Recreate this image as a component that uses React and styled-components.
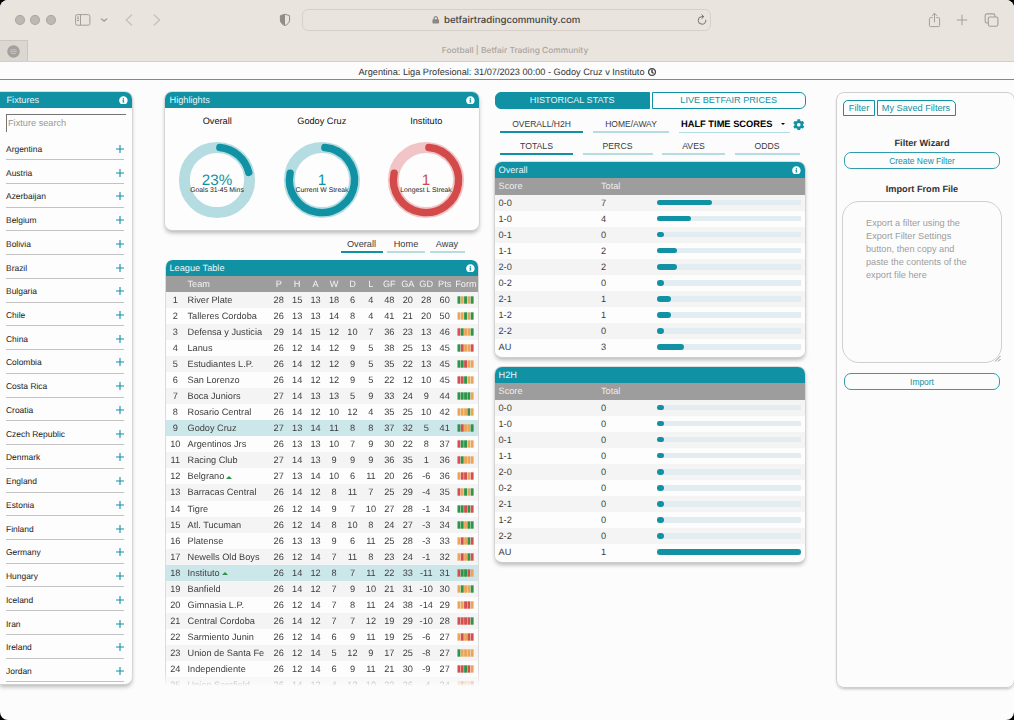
import React from "react";
import styled, { createGlobalStyle } from "styled-components";
import { FaInfoCircle, FaCog, FaRegClock, FaLock } from "react-icons/fa";

const TEAL = "#1092a4";
const PALE = "#b5dde1";
const RED = "#d34a4a";
const FORM_COLORS = { g: "#2e9447", o: "#eaa558", r: "#d2514f" };

const GlobalStyle = createGlobalStyle`
  * {
    box-sizing: border-box;
  }

  body {
    margin: 0;
    background: #000;
    color: #333;
    font-family: "Liberation Sans", Arial, Helvetica, sans-serif;
    font-size: 9.2px;
    text-rendering: geometricPrecision;
  }

  button,
  input,
  textarea {
    font-family: inherit;
    outline: none;
  }
`;

const Window = styled.div`
  display: flex;
  flex-direction: column;
  width: 1014px;
  height: 720px;
  overflow: hidden;
  border-radius: 8px;
  background: #fcfcfd;
`;

/* browser chrome */

const Toolbar = styled.div`
  flex: none;
  display: flex;
  align-items: center;
  height: 40px;
  padding: 0 15px;
  background: #e9e4de;
  color: #a39e99;

  svg {
    flex: none;
    display: block;
  }
`;

const Light = styled.i`
  width: 10px;
  height: 10px;
  margin-right: 5.3px;
  border: 1px solid #aaa5a1;
  border-radius: 50%;
  background: #bdb8b4;
`;

const Spacer = styled.div`
  flex: none;
  width: ${props => props.w || 1}px;
  height: ${props => props.h || 0}px;
`;

const Address = styled.div`
  display: flex;
  align-items: center;
  justify-content: center;
  position: relative;
  width: 411px;
  height: 22px;
  border: 1px solid #d5d0ca;
  border-radius: 6px;
  background: #e9e4de;
  color: #45423f;
  font-family: Inter, sans-serif;
  font-size: 9.65px;
  font-weight: 500;

  span {
    margin-left: 4px;
  }
`;

const Reload = styled.svg`
  position: absolute;
  right: 2px;
  top: 4px;
`;

const TabStrip = styled.div`
  flex: none;
  display: flex;
  height: 22px;
  border-bottom: 1px solid #d2cec9;
  background: #e9e4de;
`;

const PinnedTab = styled.div`
  display: flex;
  align-items: center;
  justify-content: center;
  width: 28px;
  border-top: 1px solid #cbc6c0;
  border-right: 1px solid #cbc6c0;
  background: #dcd7d1;
`;

const TabTitle = styled.div`
  flex: 1;
  padding-right: 40px;
  margin-left: 28px;
  color: #aaa6a1;
  font-family: Inter, sans-serif;
  font-size: 8.4px;
  font-weight: 500;
  line-height: 22px;
  text-align: center;
`;

const MatchTitle = styled.div`
  flex: none;
  display: flex;
  align-items: center;
  justify-content: center;
  height: 18px;
  padding: 2px 0 0;
  border-bottom: 1px solid #3fa3b1;

  svg {
    margin-left: 3px;
    font-size: 8px;
    stroke: currentColor;
    stroke-width: 30px;
  }
`;

const Content = styled.div`
  display: flex;
  align-items: flex-start;
  padding-top: 12px;
`;

/* shared pieces */

const Panel = styled.section`
  overflow: hidden;
  border-radius: 7px;
  background: #fdfdfd;
  box-shadow: 0 0 0 0.8px #d3d3d5, 0 3px 4px rgba(0, 0, 0, 0.27);
`;

const PanelHeader = styled.header`
  display: flex;
  align-items: center;
  justify-content: space-between;
  height: 16px;
  padding: 0 4.5px 0 ${props => props.pad || 4.5}px;
  background: ${TEAL};
  color: #e9f6f8;

  svg {
    color: #fff;
    font-size: 8.8px;
  }
`;

const Tab = styled.button`
  flex: none;
  width: ${props => props.w}px;
  height: ${props => props.h || 16}px;
  padding: 0;
  border: 0;
  border-bottom: 2.4px solid ${props => (props.active ? TEAL : PALE)};
  background: none;
  color: #3a3a3a;
  font-size: ${props => props.size || 9.2}px;
  line-height: 11px;
  text-align: center;
`;

/* fixtures */

const Fixtures = styled(Panel)`
  flex: none;
  width: 132px;
  height: 592px;
  border-radius: 0 7px 7px 0;
`;

const Search = styled.input`
  display: block;
  width: 120px;
  height: 17.5px;
  margin: 6px 0 5px 6px;
  padding: 0 1px;
  border: 0;
  border-top: 1.5px solid #747474;
  border-left: 1.5px solid #747474;
  background: transparent;
  font-size: 9.2px;

  &::placeholder {
    color: #979797;
    opacity: 1;
  }
`;

const Country = styled.div`
  display: flex;
  align-items: center;
  justify-content: space-between;
  width: 117.5px;
  height: 23.74px;
  margin-left: 6px;
  padding-top: 2px;
  border-bottom: 1px solid #c2c2c2;
  color: #222;
  font-size: 8.45px;
`;

/* highlights and league table */

const Center = styled.div`
  flex: none;
  width: 314px;
  margin-left: 33px;
`;

const Highlights = styled(Panel)`
  height: 138px;
`;

const Charts = styled.div`
  display: grid;
  grid-template-columns: repeat(3, 104.5px);
`;

const Chart = styled.div`
  display: flex;
  flex-direction: column;
  align-items: center;
  color: #111;

  h4 {
    margin: 8px 0 14px;
    font-size: 9.2px;
    font-weight: normal;
    line-height: 11px;
  }
`;

const VenueTabs = styled.div`
  display: flex;
  justify-content: flex-end;
  gap: 4.5px;
  height: 30px;
  padding: 7px 14.5px 0 0;
`;

const LeaguePanel = styled(Panel)`
  height: 426px;
  border-radius: 7px 7px 0 0;
  border-right: 1px solid #dcdcde;
  border-left: 1px solid #dcdcde;
  box-shadow: none;
  mask-image: linear-gradient(#000 412px, rgba(0, 0, 0, 0.25) 423px, transparent 426px);
`;

const LeagueHeader = styled(PanelHeader)`
  padding: 0 3.5px;
`;

const LeagueRow = styled.div`
  display: grid;
  grid-template-columns: 18.5px 85px repeat(10, 18.45px) 1fr;
  align-items: center;
  height: ${props => (props.head ? 15.5 : 16.09)}px;
  background: ${props => (props.head ? "#9d9d9d" : props.marked ? "#cce7ea" : props.odd ? "#f4f4f4" : "#fdfdfd")};
  color: ${props => (props.head ? "#f3f3f3" : "#3c3c3c")};
  text-align: center;
  white-space: nowrap;
`;

const Team = styled.span`
  padding-left: 3px;
  text-align: left;
`;

const Up = styled.i`
  display: inline-block;
  margin-left: 2px;
  vertical-align: 0.5px;
  border: 3px solid transparent;
  border-top: 0;
  border-bottom: 3px solid #2b9447;
`;

const FormChart = styled.svg`
  display: block;
  margin: 0 auto;
`;

/* stats */

const Stats = styled.div`
  flex: none;
  width: 311px;
  margin-left: 16px;
`;

const Modes = styled.div`
  display: flex;
  gap: 2px;
`;

const Mode = styled.button`
  flex: 1;
  height: 17px;
  padding: 0 0 1px;
  border: 1.5px solid ${TEAL};
  border-radius: ${props => (props.active ? "6px 0 0 6px" : "0 6px 6px 0")};
  background: ${props => (props.active ? TEAL : "#fdfdfd")};
  color: ${props => (props.active ? "#e9f6f8" : TEAL)};
  font-size: 9.15px;
`;

const TabRow = styled.div`
  display: flex;
  align-items: flex-start;
  gap: ${props => props.gap}px;
  padding: ${props => props.top}px 0 0 5px;
`;

const Market = styled.div`
  flex: none;
  display: flex;
  align-items: center;
  justify-content: space-between;
  width: 111px;
  height: 14px;
  padding: 0 5px 2px 2px;
  border-bottom: 1.8px solid ${PALE};
  color: #000;
  font-size: 9.3px;
  font-weight: bold;

  i {
    border: 2.2px solid transparent;
    border-top: 2.8px solid #000;
    border-bottom: 0;
  }
`;

const Gear = styled(FaCog)`
  flex: none;
  margin-left: -7px;
  color: ${TEAL};
  font-size: 11.5px;
`;

const ScorePanel = styled(Panel)`
  width: 310px;
  height: 194.5px;
  margin-top: ${props => props.top}px;
`;

const ScoreRow = styled.div`
  display: grid;
  grid-template-columns: 102.5px 56px 144px;
  align-items: center;
  height: ${props => (props.head ? 16.5 : 16.06)}px;
  padding-left: 3.5px;
  background: ${props => (props.head ? "#9d9d9d" : props.odd ? "#f4f4f4" : "#fdfdfd")};
  color: ${props => (props.head ? "#eee" : "#3c3c3c")};
`;

const Track = styled.div`
  height: 5.6px;
  background: #e3edf1;
`;

const Fill = styled.div`
  height: 100%;
  border-radius: 3px;
  background: ${TEAL};
`;

/* filters */

const Filters = styled.aside`
  flex: none;
  display: flex;
  flex-direction: column;
  width: 179px;
  height: 596px;
  margin-left: 29.5px;
  padding: 7px 0 0 6.5px;
  border: 1px solid #cfcfd2;
  border-radius: 8px;
  box-shadow: 0 2px 3px -1px rgba(0, 0, 0, 0.25);
`;

const FilterTabs = styled.div`
  display: flex;
  gap: 1.5px;
  margin-bottom: 21px;
`;

const FilterTab = styled.button`
  width: ${props => props.w}px;
  height: 16px;
  padding: 0;
  border: 1.2px solid ${TEAL};
  border-radius: ${props => (props.first ? "5px 0 0 0" : "0 5px 0 0")};
  background: none;
  color: ${TEAL};
  font-size: 9.2px;
`;

const FilterHeading = styled.h3`
  width: 158px;
  margin: 0;
  color: #333;
  font-size: 9.2px;
  line-height: 13px;
  text-align: center;
`;

const Pill = styled.button`
  width: 156px;
  height: 17px;
  margin-left: 1px;
  padding: 0;
  border: 1.2px solid #2f9dad;
  border-radius: 7px;
  background: none;
  color: ${TEAL};
  font-size: 8.45px;
`;

const ImportBox = styled.div`
  position: relative;
  width: 160px;
  height: 162px;
  margin: 5px 0 10px -1px;

  textarea {
    display: block;
    width: 100%;
    height: 100%;
    padding: 15px 26px 0 23px;
    border: 1px solid #cfcfcf;
    border-radius: 17px;
    background: transparent;
    font-size: 9.2px;
    line-height: 13px;
    resize: none;
    overflow: hidden;
  }

  textarea::placeholder {
    color: #9c9c9c;
    opacity: 1;
  }

  svg {
    position: absolute;
    right: 1px;
    bottom: 1px;
  }
`;

const countries = [
  "Argentina", "Austria", "Azerbaijan", "Belgium", "Bolivia", "Brazil", "Bulgaria", "Chile",
  "China", "Colombia", "Costa Rica", "Croatia", "Czech Republic", "Denmark", "England", "Estonia",
  "Finland", "Germany", "Hungary", "Iceland", "Iran", "Ireland", "Jordan"
];

const league = [
  ["River Plate", [28, 15, 13, 18, 6, 4, 48, 20, 28, 60], "gogog"],
  ["Talleres Cordoba", [26, 13, 13, 14, 8, 4, 41, 21, 20, 50], "oogog"],
  ["Defensa y Justicia", [29, 14, 15, 12, 10, 7, 36, 23, 13, 46], "rgoog"],
  ["Lanus", [26, 12, 14, 12, 9, 5, 38, 25, 13, 45], "groor"],
  ["Estudiantes L.P.", [26, 14, 12, 12, 9, 5, 35, 22, 13, 45], "ggroo"],
  ["San Lorenzo", [26, 14, 12, 12, 9, 5, 22, 12, 10, 45], "rrgoo"],
  ["Boca Juniors", [27, 14, 13, 13, 5, 9, 33, 24, 9, 44], "ggggo"],
  ["Rosario Central", [26, 14, 12, 10, 12, 4, 35, 25, 10, 42], "ooogo"],
  ["Godoy Cruz", [27, 13, 14, 11, 8, 8, 37, 32, 5, 41], "groog"],
  ["Argentinos Jrs", [26, 13, 13, 10, 7, 9, 30, 22, 8, 37], "rggoo"],
  ["Racing Club", [27, 14, 13, 9, 9, 9, 36, 35, 1, 36], "rgooo"],
  ["Belgrano", [27, 13, 14, 10, 6, 11, 20, 26, -6, 36], "orror", true],
  ["Barracas Central", [26, 14, 12, 8, 11, 7, 25, 29, -4, 35], "rogog"],
  ["Tigre", [26, 12, 14, 9, 7, 10, 27, 28, -1, 34], "ggrgr"],
  ["Atl. Tucuman", [26, 12, 14, 8, 10, 8, 24, 27, -3, 34], "ggogg"],
  ["Platense", [26, 13, 13, 9, 6, 11, 25, 28, -3, 33], "orogr"],
  ["Newells Old Boys", [26, 12, 14, 7, 11, 8, 23, 24, -1, 32], "orogr"],
  ["Instituto", [26, 14, 12, 8, 7, 11, 22, 33, -11, 31], "rggro", true],
  ["Banfield", [26, 14, 12, 7, 9, 10, 21, 31, -10, 30], "ogoog"],
  ["Gimnasia L.P.", [26, 12, 14, 7, 8, 11, 24, 38, -14, 29], "oorro"],
  ["Central Cordoba", [26, 14, 12, 7, 7, 12, 19, 29, -10, 28], "rrrrg"],
  ["Sarmiento Junin", [26, 12, 14, 6, 9, 11, 19, 25, -6, 27], "ororr"],
  ["Union de Santa Fe", [26, 12, 14, 5, 12, 9, 17, 25, -8, 27], "goooo"],
  ["Independiente", [26, 12, 14, 6, 9, 11, 21, 30, -9, 27], "rrgro"],
  ["Union Sarsfield", [26, 14, 12, 4, 12, 10, 22, 26, -4, 24], "oroor"]
];

const playing = ["Godoy Cruz", "Instituto"];

// [score, total, bar width in %]
const overall = [
  ["0-0", 7, 38], ["1-0", 4, 23.8], ["0-1", 0, 4.7], ["1-1", 2, 14.2], ["2-0", 2, 14.2],
  ["0-2", 0, 4.7], ["2-1", 1, 9.4], ["1-2", 1, 9.4], ["2-2", 0, 4.7], ["AU", 3, 19]
];

const h2h = overall.map(([score]) => (score === "AU" ? [score, 1, 100] : [score, 0, 4.7]));

const point = (deg, r) => {
  const a = (deg * Math.PI) / 180;
  return `${39 + r * Math.sin(a)} ${39 - r * Math.cos(a)}`;
};

const Donut = ({ end, value, label, color, track }) => (
  <svg width="78" height="78" viewBox="0 0 78 78">
    <circle cx="39" cy="39" r="32.6" fill="none" stroke={track} strokeWidth="11" />
    <path
      d={`M${point(5, 32.6)}A32.6 32.6 0 ${end > 185 ? 1 : 0} 1 ${point(end, 32.6)}`}
      fill="none"
      stroke={color}
      strokeWidth="7.4"
      strokeLinecap="round"
    />
    <text x="39" y="43.6" textAnchor="middle" fontSize="15.2" fill={color}>{value}</text>
    <text x="39" y="50.6" textAnchor="middle" fontSize="6.85" fill="#222">{label}</text>
  </svg>
);

const Form = ({ results }) => (
  <FormChart width="17" height="8" viewBox="0 0 17 8">
    {results.split("").map((result, key) => (
      <rect key={key} x={0.5 + key * 3.3} y="0.3" width="2.9" height="7.4" fill={FORM_COLORS[result]} />
    ))}
  </FormChart>
);

const Scores = ({ title, rows, top, info }) => (
  <ScorePanel top={top}>
    <PanelHeader pad={3.5}>
      {title}
      {info && <FaInfoCircle />}
    </PanelHeader>
    <ScoreRow head>
      <span>Score</span>
      <span>Total</span>
    </ScoreRow>
    {rows.map(([score, total, width], key) => (
      <ScoreRow key={score} odd={key % 2 === 0 ? 1 : 0}>
        <span>{score}</span>
        <span>{total}</span>
        <Track>
          <Fill style={{ width: `${width}%` }} />
        </Track>
      </ScoreRow>
    ))}
  </ScorePanel>
);

const Chrome = () => (
  <>
    <Toolbar>
      <Light />
      <Light />
      <Light />
      <Spacer w={14} />
      <svg width="16" height="12" viewBox="0 0 16 12" fill="none" stroke="currentColor">
        <rect x="0.6" y="0.6" width="14.3" height="10.6" rx="1.6" />
        <path d="M5.5 .6v10.6M2 3h2M2 4.8h2M2 6.6h2" />
      </svg>
      <Spacer w={9} />
      <svg width="8" height="6" viewBox="0 0 8 6" fill="none" stroke="currentColor" strokeWidth="1.4" strokeLinecap="round">
        <path d="M1.5 2l2.6 2 2.6-2" />
      </svg>
      <Spacer w={17} />
      <svg width="8" height="12" viewBox="0 0 8 12" fill="none" stroke="#c6c1bc" strokeWidth="1.3" strokeLinecap="round">
        <path d="M6.6 1L1.2 6l5.4 5" />
      </svg>
      <Spacer w={20} />
      <svg width="8" height="12" viewBox="0 0 8 12" fill="none" stroke="#c6c1bc" strokeWidth="1.3" strokeLinecap="round">
        <path d="M1.2 1l5.4 5-5.4 5" />
      </svg>
      <Spacer w={118} />
      <svg width="12" height="14" viewBox="0 0 12 14">
        <path d="M6 1.2L10.6 2.7V7c0 2.8-2.2 4.5-4.6 5.6C3.6 11.5 1.4 9.8 1.4 7V2.7z" fill="none" stroke="#918c88" />
        <path d="M6 1.2v11.4C3.6 11.5 1.4 9.8 1.4 7V2.7z" fill="#918c88" />
      </svg>
      <Spacer w={11} />
      <Address>
        <FaLock size={7.5} color="#8b8783" />
        <span>betfairtradingcommunity.com</span>
        <Reload width="12" height="12" viewBox="0 0 12 12" fill="none" stroke="#75716d" strokeLinecap="round">
          <path d="M9.8 6.3A3.8 3.8 0 1 1 6 2.6h1.5" />
          <path d="M5.8 .7l2 1.9-2 1.9" />
        </Reload>
      </Address>
      <Spacer w={217} />
      <svg width="13" height="16" viewBox="0 0 13 16" fill="none" stroke="currentColor" strokeLinecap="round" strokeLinejoin="round">
        <path d="M4.3 5.6H2.4a1 1 0 0 0-1 1v7a1 1 0 0 0 1 1h8.2a1 1 0 0 0 1-1v-7a1 1 0 0 0-1-1H8.700" />
        <path d="M6.5 10V1.5M4.3 3.5l2.2-2.2 2.2 2.2" />
      </svg>
      <Spacer w={15} />
      <svg width="12" height="12" viewBox="0 0 12 12" stroke="currentColor" strokeLinecap="round">
        <path d="M6 1.2v9.6M1.2 6h9.6" />
      </svg>
      <Spacer w={16} />
      <svg width="15" height="14" viewBox="0 0 15 14" fill="none" stroke="currentColor" strokeWidth="1.1">
        <rect x="4.3" y="4" width="9.6" height="9.2" rx="1.6" />
        <path d="M4.3 10H2.8a1.6 1.6 0 0 1-1.6-1.6V2.5A1.6 1.6 0 0 1 2.8 .9h6.5a1.6 1.6 0 0 1 1.6 1.6V4" />
      </svg>
    </Toolbar>
    <TabStrip>
      <PinnedTab>
        <svg width="13" height="13" viewBox="0 0 13 13">
          <circle cx="6.5" cy="6.5" r="6.2" fill="#a5a09d" />
          <path d="M3.5 4.8h6M3 6.6h7M4 8.4h5" stroke="#c9c5c1" strokeWidth=".9" />
        </svg>
      </PinnedTab>
      <TabTitle>Football | Betfair Trading Community</TabTitle>
    </TabStrip>
  </>
);

export default () => (
  <Window>
    <GlobalStyle />
    <Chrome />
    <MatchTitle>
      Argentina: Liga Profesional: 31/07/2023 00:00 - Godoy Cruz v Instituto
      <FaRegClock />
    </MatchTitle>
    <Content>
      <Fixtures>
        <PanelHeader pad={6.5}>
          Fixtures
          <FaInfoCircle />
        </PanelHeader>
        <Search placeholder="Fixture search" />
        {countries.map(country => (
          <Country key={country}>
            {country}
            <svg width="8" height="8" viewBox="0 0 8 8" stroke={TEAL} strokeWidth="1.1">
              <path d="M4 0v8M0 4h8" />
            </svg>
          </Country>
        ))}
      </Fixtures>

      <Center>
        <Highlights>
          <PanelHeader>
            Highlights
            <FaInfoCircle />
          </PanelHeader>
          <Charts>
            <Chart>
              <h4>Overall</h4>
              <Donut end={76.6} value="23%" label="Goals 31-45 Mins" color={TEAL} track={PALE} />
            </Chart>
            <Chart>
              <h4>Godoy Cruz</h4>
              <Donut end={282} value="1" label="Current W Streak" color={TEAL} track={PALE} />
            </Chart>
            <Chart>
              <h4>Instituto</h4>
              <Donut end={282} value="1" label="Longest L Streak" color={RED} track="#f1c5c7" />
            </Chart>
          </Charts>
        </Highlights>

        <VenueTabs>
          <Tab w={42} active={1}>Overall</Tab>
          <Tab w={38}>Home</Tab>
          <Tab w={35}>Away</Tab>
        </VenueTabs>

        <LeaguePanel>
          <LeagueHeader>
            League Table
            <FaInfoCircle />
          </LeagueHeader>
          <LeagueRow head>
            <span />
            <Team>Team</Team>
            {["P", "H", "A", "W", "D", "L", "GF", "GA", "GD", "Pts", "Form"].map(name => (
              <span key={name}>{name}</span>
            ))}
          </LeagueRow>
          {league.map(([name, numbers, form, up], row) => (
            <LeagueRow key={name} odd={row % 2 === 0 ? 1 : 0} marked={playing.includes(name) ? 1 : 0}>
              <span>{row + 1}</span>
              <Team>
                {name}
                {up && <Up />}
              </Team>
              {numbers.map((number, key) => (
                <span key={key}>{number}</span>
              ))}
              <Form results={form} />
            </LeagueRow>
          ))}
        </LeaguePanel>
      </Center>

      <Stats>
        <Modes>
          <Mode active={1}>HISTORICAL STATS</Mode>
          <Mode>LIVE BETFAIR PRICES</Mode>
        </Modes>
        <TabRow gap={10} top={9.5}>
          <Tab w={83} h={14} size={8.5} active={1}>OVERALL/H2H</Tab>
          <Tab w={76} h={14} size={8.5}>HOME/AWAY</Tab>
          <Market>
            HALF TIME SCORES
            <i />
          </Market>
          <Gear />
        </TabRow>
        <TabRow gap={9.5} top={7.5}>
          <Tab w={73} h={15} size={8.7} active={1}>TOTALS</Tab>
          <Tab w={70} h={15} size={8.7}>PERCS</Tab>
          <Tab w={63} h={15} size={8.7}>AVES</Tab>
          <Tab w={65} h={15} size={8.7}>ODDS</Tab>
        </TabRow>
        <Scores title="Overall" rows={overall} top={7} info />
        <Scores title="H2H" rows={h2h} top={10.5} />
      </Stats>

      <Filters>
        <FilterTabs>
          <FilterTab w={32} first={1}>Filter</FilterTab>
          <FilterTab w={79}>My Saved Filters</FilterTab>
        </FilterTabs>
        <FilterHeading>Filter Wizard</FilterHeading>
        <Spacer h={2} />
        <Pill>Create New Filter</Pill>
        <Spacer h={14} />
        <FilterHeading>Import From File</FilterHeading>
        <ImportBox>
          <textarea placeholder="Export a filter using the Export Filter Settings button, then copy and paste the contents of the export file here" />
          <svg width="7" height="7" viewBox="0 0 7 7" stroke="#777" strokeWidth=".8">
            <path d="M1 6.5L6.5 1M4 6.5L6.5 4" />
          </svg>
        </ImportBox>
        <Pill>Import</Pill>
      </Filters>
    </Content>
  </Window>
);
